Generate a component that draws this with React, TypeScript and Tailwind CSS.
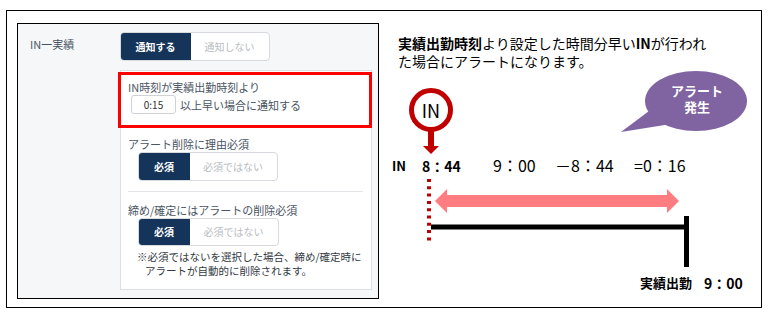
import React from 'react'

const jp = "font-['Noto_Sans_CJK_JP','Noto_Sans',sans-serif]"

function Toggle({ on, off, w, dark, h = 'h-[29px]' }: { on: string; off: string; w: string; dark: string; h?: string }) {
  return (
    <div className={`flex ${w} ${h} rounded-[4px] border border-[#d6d9dd] bg-white overflow-hidden text-[10px]`}>
      <div className={`${dark} -m-px bg-[#143559] rounded-l-[4px] flex items-center justify-center font-bold text-white`}>{on}</div>
      <div className="flex-1 flex items-center justify-center text-[#b9bcc0]">{off}</div>
    </div>
  )
}

function SettingsPanel() {
  return (
    <div className="ml-[10px] mt-[12px] w-[362px] h-[276px] border border-black bg-[#f6f7f9] flex text-[#4a5462]">
      <div className="w-[102px] pl-[12px] pt-[12px] text-[11px] leading-[16px]">IN一実績</div>
      <div className="flex-1 pt-[8px] pr-[6px]">
        <Toggle on="通知する" off="通知しない" w="w-[150px]" dark="w-[71px]" />
        <div className="relative mt-[9px] h-[220px] border border-[#dcdfe3] bg-white pl-[7px] pr-[8px] text-[11px] leading-[16px]">
          <div className="absolute left-[-3px] top-[1px] w-[254px] h-[56px] border-[3px] border-[#ff0000]" />
          <div className="pt-[8px]">IN時刻が実績出勤時刻より</div>
          <div className="flex items-center gap-[4px] ml-[3px]">
            <div className="w-[45px] h-[19px] rounded-[3px] border border-[#cfd2d6] flex items-center justify-center text-[10px] text-[#333]">0:15</div>
            <span>以上早い場合に通知する</span>
          </div>
          <div className="mt-[22px]">アラート削除に理由必須</div>
          <div className="ml-[10px]">
            <Toggle on="必須" off="必須ではない" w="w-[140px]" dark="w-[52px]" />
          </div>
          <div className="mt-[10px] border-t border-[#e3e5e8]" />
          <div className="mt-[11px] leading-[15px]">締め/確定にはアラートの削除必須</div>
          <div className="ml-[10px]">
            <Toggle on="必須" off="必須ではない" w="w-[141px]" dark="w-[52px]" h="h-[28px]" />
          </div>
          <div className="mt-[4px] ml-[9px] text-[10.5px] leading-[14px] text-[#333a44]">
            <div>※必須ではないを選択した場合、締め/確定時に</div>
            <div className="pl-[8px]">アラートが自動的に削除されます。</div>
          </div>
        </div>
      </div>
    </div>
  )
}

function Diagram() {
  return (
    <div className="relative flex-1 self-stretch text-black">
      <div className="pl-[19px] pt-[23px] text-[14px] leading-[18px]">
        <div>
          <b>実績出勤時刻</b>より設定した時間分早い<b>IN</b>が行われ
        </div>
        <div>た場合にアラートになります。</div>
      </div>

      <svg className="absolute left-0 top-0" width="381" height="296" viewBox="0 0 381 296">
        <path d="M242 121 L274 97 L292 113 Z" fill="#8064a2" />
        <ellipse cx="317" cy="90" rx="51" ry="30" fill="#8064a2" />
        <circle cx="52" cy="99" r="19.5" fill="white" stroke="#c00000" strokeWidth="5" />
        <rect x="49" y="118" width="6" height="18" fill="#c00000" />
        <path d="M44 135 L60 135 L52 143 Z" fill="#c00000" />
        <line x1="50" y1="168" x2="50" y2="230" stroke="#c00000" strokeWidth="4" strokeDasharray="3 4.3" />
        <path d="M56 190 L68 178 L68 184 L288 184 L288 178 L300 190 L288 202 L288 196 L68 196 L68 202 Z" fill="#ff7c80" />
        <line x1="52" y1="216" x2="308" y2="216" stroke="black" strokeWidth="5" />
        <line x1="307.5" y1="205" x2="307.5" y2="256" stroke="black" strokeWidth="5" />
      </svg>

      {/* IN marker label */}
      <div className="absolute left-[32px] top-[87px] w-[40px] h-[24px] flex items-center justify-center text-[18px] leading-[24px]">IN</div>

      {/* time calculation row */}
      <div className="absolute left-[13px] top-[145px] h-[20px] flex items-center whitespace-nowrap">
        <span className="w-[30px] text-[13px] font-bold">IN</span>
        <span className="w-[71px] text-[14px] font-bold">8：44</span>
        <span className="w-[62px] text-[16px] -mt-[3px]">9：00</span>
        <span className="w-[79px] text-[16px] -mt-[3px]">－8：44</span>
        <span className="text-[16px] -mt-[3px]">=0：16</span>
      </div>

      <div className="absolute left-[261px] top-[263px] h-[18px] flex items-center whitespace-nowrap font-bold">
        <span className="w-[64px] text-[13px]">実績出勤</span>
        <span className="text-[14px]">9：00</span>
      </div>

      {/* speech bubble text */}
      <div className="absolute left-[278px] top-[71px] w-[80px] flex flex-col items-center text-[13px] leading-[17px] font-bold text-white">
        <span>アラート</span>
        <span className="-mt-px">発生</span>
      </div>
    </div>
  )
}

export default function App() {
  return (
    <div className={`w-[770px] h-[319px] bg-white pt-[10px] pl-[6px] ${jp}`}>
      <div className="w-[756px] h-[298px] border border-black flex items-start">
        <SettingsPanel />
        <Diagram />
      </div>
    </div>
  )
}
